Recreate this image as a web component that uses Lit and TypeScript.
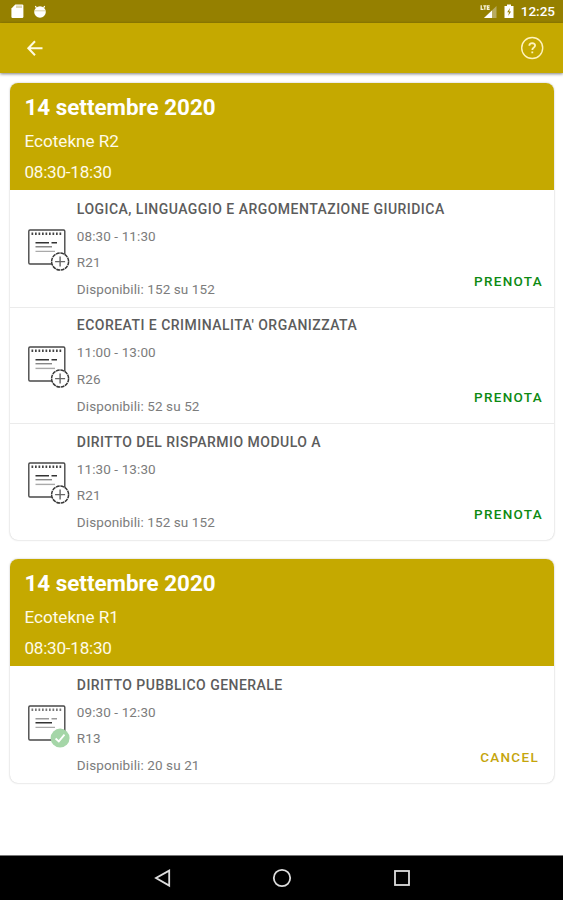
import { LitElement, html, css, svg } from "lit";
import { customElement, property } from "lit/decorators.js";

interface Lesson {
  title: string;
  time: string;
  room: string;
  seats: string;
  booked?: boolean;
}

interface Day {
  date: string;
  place: string;
  hours: string;
  lessons: Lesson[];
}

const DAYS: Day[] = [
  {
    date: "14 settembre 2020",
    place: "Ecotekne R2",
    hours: "08:30-18:30",
    lessons: [
      { title: "LOGICA, LINGUAGGIO E ARGOMENTAZIONE GIURIDICA", time: "08:30 - 11:30", room: "R21", seats: "152 su 152" },
      { title: "ECOREATI E CRIMINALITA' ORGANIZZATA", time: "11:00 - 13:00", room: "R26", seats: "52 su 52" },
      { title: "DIRITTO DEL RISPARMIO MODULO A", time: "11:30 - 13:30", room: "R21", seats: "152 su 152" },
    ],
  },
  {
    date: "14 settembre 2020",
    place: "Ecotekne R1",
    hours: "08:30-18:30",
    lessons: [
      { title: "DIRITTO PUBBLICO GENERALE", time: "09:30 - 12:30", room: "R13", seats: "20 su 21", booked: true },
    ],
  },
];

@customElement("lesson-row")
export class LessonRow extends LitElement {
  @property({ attribute: false }) lesson!: Lesson;

  static styles = css`
    :host {
      display: flex;
      box-sizing: border-box;
      height: 116.6px;
      padding: 5.6px 10.5px 0 17.3px;
    }
    .icon {
      flex: none;
      width: 44px;
      height: 44px;
      margin: 32.2px 6px 0 0;
    }
    .info {
      flex: 1;
      font-size: 13.5px;
      line-height: 26.7px;
      letter-spacing: 0.1px;
      color: #7c7c7c;
      white-space: nowrap;
    }
    .title {
      font-size: 14px;
      font-weight: 500;
      letter-spacing: 0.47px;
      color: #5c5c5c;
    }
    .action {
      align-self: flex-end;
      margin-bottom: 16.4px;
      padding: 0;
      border: 0;
      background: none;
      font: 500 13.5px/20px Roboto, sans-serif;
      letter-spacing: 1.3px;
      color: #0d8a12;
    }
    .cancel {
      margin-right: 4px;
      color: #c5a50c;
    }
  `;

  render() {
    const l = this.lesson;
    const ink = l.booked ? "#777" : "#444";
    return html`
      <svg class="icon" viewBox="0 0 44 44" fill="none">
        <rect x="1.8" y="2" width="36" height="34" rx="1.2" stroke="#484848" stroke-width="1.4" />
        <path d="M4.5 5.7H35" stroke="${ink}" stroke-width="2.6" stroke-dasharray="1.7 1.8" />
        <path d="M8.5 14.8H22M24.5 14.8H30" stroke="${l.booked ? "#999" : "#333"}" stroke-width="1.5" />
        <path d="M8.5 18.7H25" stroke="${l.booked ? "#333" : "#888"}" stroke-width="1.4" />
        <path d="M8.5 23.4H28" stroke="#aaa" stroke-width="1.4" />
        ${l.booked
          ? svg`<circle cx="33.1" cy="34.1" r="9.5" fill="#a5d6a8" />
              <path d="M28.6 34.5L31.8 37.4L37.5 30.6" stroke="#fff" stroke-width="1.8" />`
          : svg`<circle cx="33.1" cy="33.6" r="8.5" fill="#fff" stroke="#383838" stroke-width="1.5" stroke-dasharray="3.8 .65" />
              <path d="M28.1 33.6H38.1M33.1 28.6V38.6" stroke="#666" stroke-width="1.4" />`}
      </svg>
      <div class="info">
        <div class="title">${l.title}</div>
        <div>${l.time}</div>
        <div>${l.room}</div>
        <div>Disponibili: ${l.seats}</div>
      </div>
      <button class="action ${l.booked ? "cancel" : ""}">${l.booked ? "CANCEL" : "PRENOTA"}</button>
    `;
  }
}

@customElement("app-root")
export class AppRoot extends LitElement {
  static styles = css`
    :host {
      display: flex;
      flex-direction: column;
      height: 900px;
      background: #fff;
      font-family: Roboto, sans-serif;
      color: #fff;
      overflow: hidden;
    }
    .status {
      flex: none;
      height: 23px;
      box-sizing: border-box;
      padding: 0 8px 0 10px;
      display: flex;
      align-items: center;
      background: #958000;
    }
    .time {
      font-size: 13.5px;
      font-weight: 500;
      line-height: 23px;
    }
    .spacer {
      flex: 1;
    }
    .bar {
      flex: none;
      height: 50px;
      box-sizing: border-box;
      padding: 0 19px 0 23px;
      display: flex;
      align-items: center;
      justify-content: space-between;
      background: #c5a900;
      box-shadow: 0 1px 3px rgba(0, 0, 0, 0.5);
    }
    .cards {
      flex: 1;
      padding: 10px 9.5px 0 9.5px;
      display: flex;
      flex-direction: column;
      gap: 19px;
    }
    .card {
      border-radius: 8px;
      background: #fff;
      box-shadow: 0 0 2px rgba(0, 0, 0, 0.28);
      overflow: hidden;
    }
    .head {
      height: 107.3px;
      box-sizing: border-box;
      padding: 9px 15px 0;
      background: #c5a900;
      font-size: 17.1px;
      line-height: 31px;
      color: #fffbe8;
    }
    .date {
      margin-bottom: 4px;
      font-size: 22.4px;
      font-weight: 700;
      line-height: 30px;
      color: #fff;
    }
    .hours {
      letter-spacing: -0.25px;
    }
    lesson-row + lesson-row {
      padding-top: 4.6px;
      border-top: 1px solid #ebebeb;
    }
    .nav {
      flex: none;
      height: 45px;
      box-sizing: border-box;
      border-top: 1px solid #777;
      background: #000;
      display: flex;
      justify-content: center;
      align-items: center;
      gap: 98px;
    }
    svg {
      display: block;
      flex: none;
    }
  `;

  render() {
    return html`
      <div class="status">
        <svg width="38" height="23" viewBox="0 0 38 23" fill="#fff">
          <path d="M5.3 4.5H12.2Q13.4 4.5 13.4 5.7V16.8Q13.4 18 12.2 18H2.6Q1.4 18 1.4 16.8V8.4Z" />
          <path d="M7 5.5V8M9 5.5V8M11 5.5V8" stroke="#b5a65a" stroke-width=".9" />
          <circle cx="30" cy="12" r="5.8" />
          <path d="M26.4 8L25.4 6M33.6 8L34.6 6" stroke="#fff" stroke-width="1.2" />
          <path d="M24.3 10.8H35.7" stroke="#cfc592" stroke-width=".8" />
        </svg>
        <div class="spacer"></div>
        <svg width="42" height="23" viewBox="0 0 42 23" fill="#fff">
          <path d="M17.5 6V18H5Z" fill="#b8ab62" />
          <path d="M13 10.5V18H5Z" />
          <path d="M2.2 5.3V9.3H4.5M4.3 5.8H7.3M5.8 5.8V9.8M10.7 5.8H8.4V9.3H10.7M8.4 7.6H10.4" fill="none" stroke="#f6f2d8" stroke-width="1.3" />
          <path d="M28 4.5H32V6H34.5V18H25.5V6H28Z" />
          <path d="M31 8L28.2 12.3H30L29.2 16L32 11.5H30.2Z" fill="#958000" />
        </svg>
        <div class="time">12:25</div>
      </div>
      <div class="bar">
        <svg width="24" height="24" viewBox="0 0 24 24" fill="none" stroke="#fffbe0" stroke-width="2">
          <path d="M19.5 12.3H6M12 5.3L5.3 12.3L12 19.3" />
        </svg>
        <svg width="24" height="24" viewBox="0 0 24 24" fill="none" stroke="#fff3bd">
          <circle cx="12.2" cy="12" r="10.5" stroke-width="1.4" />
          <path d="M9.3 9.8Q9.4 7.1 12.2 7.1Q15.1 7.2 15.1 9.5Q15.1 10.7 13.6 11.8Q12.3 12.7 12.3 14.1M12.3 15.4V17.3" stroke-width="1.8" />
        </svg>
      </div>
      <div class="cards">
        ${DAYS.map(
          (d) => html`<section class="card">
            <div class="head">
              <div class="date">${d.date}</div>
              <div>${d.place}</div>
              <div class="hours">${d.hours}</div>
            </div>
            ${d.lessons.map((l) => html`<lesson-row .lesson=${l}></lesson-row>`)}
          </section>`
        )}
      </div>
      <div class="nav">
        <svg width="22" height="22" viewBox="0 0 22 22" fill="none" stroke="#ddd" stroke-width="1.8">
          <path d="M18.2 3.6V18.6L5 11Z" />
        </svg>
        <svg width="22" height="22" viewBox="0 0 22 22" fill="none" stroke="#ddd" stroke-width="1.8">
          <circle cx="11" cy="11" r="8.2" />
        </svg>
        <svg width="22" height="22" viewBox="0 0 22 22" fill="none" stroke="#ddd" stroke-width="1.8">
          <rect x="4" y="4" width="14" height="14" />
        </svg>
      </div>
    `;
  }
}
